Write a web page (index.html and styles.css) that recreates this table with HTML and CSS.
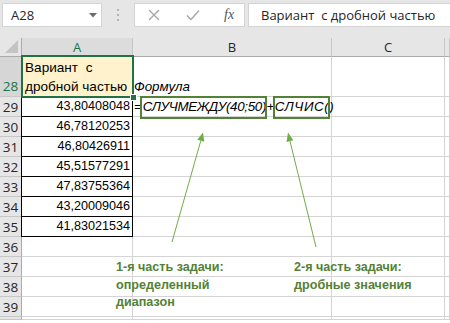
FILE: index.html
```html
<!DOCTYPE html>
<html lang="ru">
<head>
<meta charset="utf-8">
<link rel="stylesheet" href="styles.css">
</head>
<body>
<div class="app">
  <div class="toolbar">
    <div class="namebox">
      <span>A28</span>
      <svg class="caret" width="8" height="5" viewBox="0 0 8 5"><path d="M0 0H8L4 4.5Z" fill="#6b6b6b"/></svg>
    </div>
    <div class="grip"><i></i><i></i><i></i></div>
    <div class="fxbtns">
      <svg class="ico" width="12" height="12" viewBox="0 0 12 12"><path d="M1 1L11 11M11 1L1 11" stroke="#a6a6a6" stroke-width="1.3" fill="none"/></svg>
      <svg class="ico" width="14" height="12" viewBox="0 0 14 12"><path d="M1 6.5L5 10.5L13 1.5" stroke="#a6a6a6" stroke-width="1.4" fill="none"/></svg>
      <span class="fx">fx</span>
    </div>
    <div class="formula">Вариант&nbsp; с дробной частью</div>
  </div>

  <div class="sheet">
    <div class="corner"><svg width="13" height="13" viewBox="0 0 13 13"><path d="M13 0V13H0Z" fill="#c4c4c4"/></svg></div>
    <div class="ch sel">A</div>
    <div class="ch">B</div>
    <div class="ch">C</div>
    <div class="ch"></div>

    <div class="rh selrow">28</div>
    <div class="c a hdr">Вариант&nbsp; с<br>дробной частью</div>
    <div class="c it">Формула</div>
    <div class="c"></div>
    <div class="c"></div>

    <div class="rh">29</div>
    <div class="c a num">43,80408048</div>
    <div class="c it ov">=<span class="p1">СЛУЧМЕЖДУ(40;50)</span><span class="plus">+</span><span class="p2">СЛЧИС()</span></div>
    <div class="c"></div>
    <div class="c"></div>

    <div class="rh">30</div>
    <div class="c a num">46,78120253</div>
    <div class="c"></div><div class="c"></div><div class="c"></div>

    <div class="rh">31</div>
    <div class="c a num">46,80426911</div>
    <div class="c"></div><div class="c"></div><div class="c"></div>

    <div class="rh">32</div>
    <div class="c a num">45,51577291</div>
    <div class="c"></div><div class="c"></div><div class="c"></div>

    <div class="rh">33</div>
    <div class="c a num">47,83755364</div>
    <div class="c"></div><div class="c"></div><div class="c"></div>

    <div class="rh">34</div>
    <div class="c a num">43,20009046</div>
    <div class="c"></div><div class="c"></div><div class="c"></div>

    <div class="rh">35</div>
    <div class="c a num">41,83021534</div>
    <div class="c"></div><div class="c"></div><div class="c"></div>

    <div class="rh">36</div>
    <div class="c"></div><div class="c"></div><div class="c"></div><div class="c"></div>
    <div class="rh">37</div>
    <div class="c"></div><div class="c"></div><div class="c"></div><div class="c"></div>
    <div class="rh">38</div>
    <div class="c"></div><div class="c"></div><div class="c"></div><div class="c"></div>
    <div class="rh">39</div>
    <div class="c"></div><div class="c"></div><div class="c"></div><div class="c"></div>
    <div class="rh"></div>
    <div class="c"></div><div class="c"></div><div class="c"></div><div class="c"></div>
  </div>

  <svg class="overlay" width="450" height="323" viewBox="0 0 450 323">
    <rect x="141" y="97" width="125" height="21" fill="none" stroke="#538135" stroke-width="2"/>
    <rect x="274" y="97" width="55" height="21" fill="none" stroke="#538135" stroke-width="2"/>
    <path d="M172 242L200.8 140.7" stroke="#70ad47" stroke-width="1" fill="none"/>
    <path d="M203 132.5L204.3 141.7L197.3 139.7Z" fill="#70ad47"/>
    <path d="M316 247L289.9 140.8" stroke="#70ad47" stroke-width="1" fill="none"/>
    <path d="M288 132.5L293.3 140.3L286.5 141.9Z" fill="#70ad47"/>
  </svg>

  <div class="note n1">1-я часть задачи:<br>определенный<br>диапазон</div>
  <div class="note n2">2-я часть задачи:<br>дробные значения</div>
</div>
</body>
</html>
```

FILE: styles.css
```css
html, body {
  margin: 0;
  padding: 0;
  background: #ffffff;
}
.app {
  position: relative;
  width: 450px;
  height: 323px;
  overflow: hidden;
  font-family: "Liberation Sans", Arial, sans-serif;
}
.toolbar {
  height: 38px;
  box-sizing: border-box;
  background: #e6e6e6;
  padding-top: 3px;
  display: flex;
  align-items: flex-start;
  font-family: "Open Sans", "Noto Sans", sans-serif;
  font-size: 13px;
  color: #262626;
}
.namebox {
  margin-left: 2px;
  width: 100px;
  height: 24px;
  box-sizing: border-box;
  background: #fff;
  border: 1px solid #d4d4d4;
  display: flex;
  align-items: center;
  justify-content: space-between;
  padding: 0 4px 0 8px;
}
.caret { margin-top: 1px; }
.grip {
  width: 32px;
  height: 24px;
  display: flex;
  flex-direction: column;
  align-items: center;
  justify-content: center;
  gap: 3px;
}
.grip i {
  display: block;
  width: 2px;
  height: 2px;
  background: #b3b3b3;
}
.fxbtns {
  width: 111px;
  height: 24px;
  box-sizing: border-box;
  background: #fff;
  border: 1px solid #d4d4d4;
  display: flex;
  align-items: center;
  padding-left: 13px;
}
.fxbtns .ico:nth-child(1) { margin-right: 26px; }
.fxbtns .ico:nth-child(2) { margin-right: 24px; }
.fx {
  font-family: "Liberation Serif", serif;
  font-style: italic;
  font-size: 14px;
  color: #555;
}
.formula {
  margin-left: 3px;
  flex: 1;
  height: 24px;
  box-sizing: border-box;
  background: #fff;
  border: 1px solid #d4d4d4;
  border-right: none;
  padding-left: 12px;
  line-height: 22px;
  white-space: nowrap;
}
.sheet {
  display: grid;
  grid-template-columns: 22px 111px 199px 113px 5px;
  grid-template-rows: 19px 40px repeat(11, 20px);
  font-size: 12.5px;
  color: #000;
}
.corner {
  background: #e6e6e6;
  border-right: 1px solid #ababab;
  border-bottom: 1px solid #ababab;
  box-sizing: border-box;
  display: flex;
  align-items: flex-end;
  justify-content: flex-end;
  padding: 0 3px 3px 0;
}
.ch {
  background: #e6e6e6;
  border-right: 1px solid #c6c6c6;
  border-bottom: 1px solid #ababab;
  box-sizing: border-box;
  display: flex;
  align-items: center;
  justify-content: center;
  font-family: "Open Sans", "Noto Sans", sans-serif;
  font-size: 13px;
  color: #262626;
}
.ch.sel {
  background: #dcdcdc;
  color: #217346;
}
.rh {
  background: #e6e6e6;
  border-right: 1px solid #ababab;
  border-bottom: 1px solid #c6c6c6;
  box-sizing: border-box;
  display: flex;
  align-items: center;
  justify-content: center;
  font-family: "Open Sans", "Noto Sans", sans-serif;
  font-size: 13.5px;
  color: #262626;
  padding-top: 1px;
}
.rh.selrow {
  background: #d6d6d6;
  color: #217346;
  align-items: flex-end;
  padding-bottom: 1px;
}
.c {
  border-right: 1px solid #d4d4d4;
  border-bottom: 1px solid #d4d4d4;
  box-sizing: border-box;
  white-space: nowrap;
  display: flex;
  align-items: flex-end;
  padding: 0 2px 2px 2px;
  line-height: 15px;
}
.c.hdr {
  position: relative;
  background: #fff2cc;
  white-space: normal;
  font-size: 13.6px;
  line-height: 19px;
  align-items: center;
  padding: 0 3px 0 3px;
}
.c.hdr::before {
  content: "";
  position: absolute;
  left: -1px;
  top: -2px;
  right: -2px;
  bottom: -2px;
  border: 2px solid #217346;
  pointer-events: none;
}
.c.hdr::after {
  content: "";
  position: absolute;
  right: -5px;
  bottom: -5px;
  width: 5px;
  height: 5px;
  background: #217346;
  border: 1px solid #fff;
  z-index: 2;
}
.c.it {
  font-style: italic;
  font-size: 13.4px;
  padding-left: 1px;
}
.c.ov { overflow: visible; }
.p1 {
  letter-spacing: -0.35px;
  margin-left: 1px;
}
.plus { margin: 0 0 0 0.5px; }
.p2 {
  letter-spacing: 0.55px;
  margin-left: 0.5px;
}
.c.num {
  justify-content: flex-end;
  font-size: 12.6px;
  border-right: 1px solid #000;
  border-bottom: 1px solid #000;
  box-shadow: -1px 0 0 #000;
}
.overlay {
  position: absolute;
  left: 0;
  top: 0;
  pointer-events: none;
}
.note {
  position: absolute;
  font-weight: bold;
  font-size: 12.6px;
  line-height: 17.5px;
  color: #548235;
  white-space: nowrap;
}
.n1 { left: 116px; top: 259px; }
.n2 { left: 294px; top: 259px; }
```
